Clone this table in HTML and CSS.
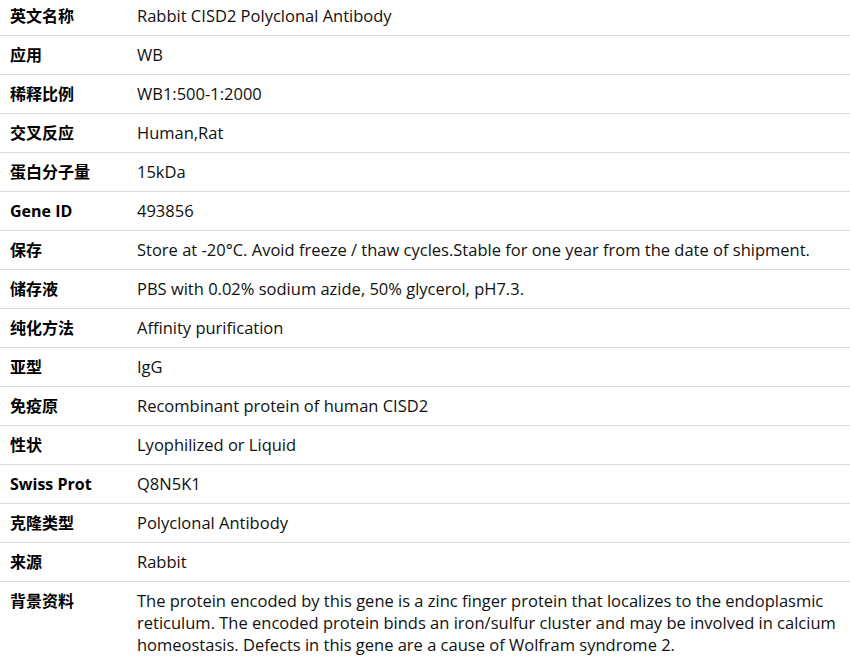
FILE: index.html
```html
<!DOCTYPE html>
<html lang="zh">
<head>
<meta charset="utf-8">
<link rel="stylesheet" href="styles.css">
</head>
<body>
<table class="spec">
<tr><th>英文名称</th><td>Rabbit CISD2 Polyclonal Antibody</td></tr>
<tr><th>应用</th><td>WB</td></tr>
<tr><th>稀释比例</th><td>WB1:500-1:2000</td></tr>
<tr><th>交叉反应</th><td>Human,Rat</td></tr>
<tr><th>蛋白分子量</th><td>15kDa</td></tr>
<tr><th>Gene ID</th><td>493856</td></tr>
<tr><th>保存</th><td>Store at -20°C. Avoid freeze / thaw cycles.Stable for one year from the date of shipment.</td></tr>
<tr><th>储存液</th><td>PBS with 0.02% sodium azide, 50% glycerol, pH7.3.</td></tr>
<tr><th>纯化方法</th><td>Affinity purification</td></tr>
<tr><th>亚型</th><td>IgG</td></tr>
<tr><th>免疫原</th><td>Recombinant protein of human CISD2</td></tr>
<tr><th>性状</th><td>Lyophilized or Liquid</td></tr>
<tr><th>Swiss Prot</th><td>Q8N5K1</td></tr>
<tr><th>克隆类型</th><td>Polyclonal Antibody</td></tr>
<tr><th>来源</th><td>Rabbit</td></tr>
<tr class="last"><th>背景资料</th><td>The protein encoded by this gene is a zinc finger protein that localizes to the endoplasmic reticulum. The encoded protein binds an iron/sulfur cluster and may be involved in calcium homeostasis. Defects in this gene are a cause of Wolfram syndrome 2.</td></tr>
</table>
</body>
</html>
```
FILE: styles.css
```css
html, body {
  margin: 0;
  padding: 0;
  background: #fff;
}
body {
  font-family: "Open Sans", "Noto Sans CJK SC", sans-serif;
  font-size: 16.5px;
  color: #111;
  overflow: hidden;
}
.spec {
  width: 100%;
  border-collapse: collapse;
  margin-top: -3px;
  table-layout: fixed;
}
.spec th, .spec td {
  border-bottom: 1px solid #dcdcdc;
  padding: 8px 0;
  line-height: 22px;
  vertical-align: top;
  text-align: left;
}
.spec th {
  width: 127px;
  padding-left: 10px;
  font-size: 16px;
  font-weight: 700;
  color: #000;
  white-space: nowrap;
}
.spec td {
  padding-right: 14px;
}
.spec tr.last th, .spec tr.last td {
  border-bottom: none;
}
```
